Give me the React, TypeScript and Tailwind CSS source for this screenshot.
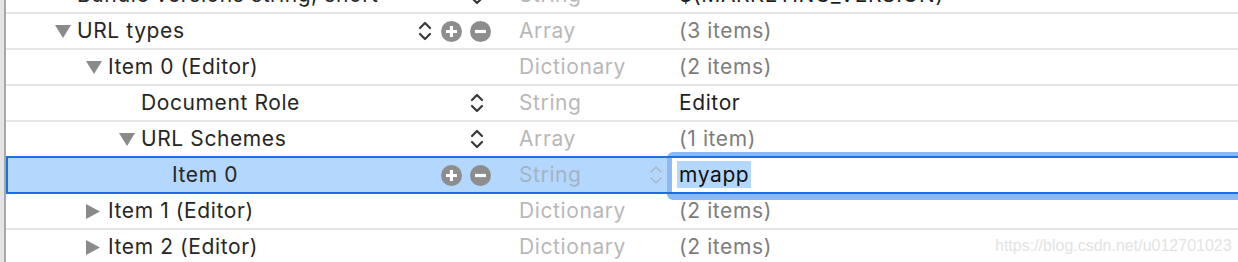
import React from "react";

const FONT = { fontFamily: "Inter, 'Noto Sans', sans-serif" };

function Stepper({ light = false }: { light?: boolean }) {
  const c = light ? "#a8b9cc" : "#3a3a3a";
  const w = light ? 1.6 : 2.2;
  return (
    <svg width="14" height="22" viewBox="0 0 14 22" className="block">
      <path d="M2 8 L7 3 L12 8" fill="none" stroke={c} strokeWidth={w} strokeLinecap="round" strokeLinejoin="round" />
      <path d="M2 14 L7 19 L12 14" fill="none" stroke={c} strokeWidth={w} strokeLinecap="round" strokeLinejoin="round" />
    </svg>
  );
}

function DownChevron() {
  return (
    <svg width="14" height="22" viewBox="0 0 14 22" className="block">
      <path d="M2 14 L7 19 L12 14" fill="none" stroke="#3a3a3a" strokeWidth={2.2} strokeLinecap="round" strokeLinejoin="round" />
    </svg>
  );
}

function PlusCircle() {
  return (
    <svg width="21" height="21" viewBox="0 0 21 21" className="block">
      <circle cx="10.5" cy="10.5" r="10.5" fill="#8d8d8d" />
      <path d="M10.5 5 V16 M5 10.5 H16" stroke="#fff" strokeWidth="3.2" />
    </svg>
  );
}

function MinusCircle() {
  return (
    <svg width="21" height="21" viewBox="0 0 21 21" className="block">
      <circle cx="10.5" cy="10.5" r="10.5" fill="#8d8d8d" />
      <path d="M5 10.5 H16" stroke="#fff" strokeWidth="3.2" />
    </svg>
  );
}

function TriDown() {
  return (
    <svg width="16" height="13" viewBox="0 0 16 13" className="block">
      <polygon points="0,0 16,0 8,13" fill="#8a8a8a" />
    </svg>
  );
}

function TriRight() {
  return (
    <svg width="14" height="15" viewBox="0 0 14 15" className="block">
      <polygon points="0,0 14,7.5 0,15" fill="#8a8a8a" />
    </svg>
  );
}

type Ctrl = "stepper" | "plus" | "minus" | "down" | null;

function Controls({ slots }: { slots: [Ctrl, Ctrl, Ctrl] }) {
  const render = (c: Ctrl) => {
    if (c === "stepper") return <Stepper />;
    if (c === "plus") return <PlusCircle />;
    if (c === "minus") return <MinusCircle />;
    if (c === "down") return <DownChevron />;
    return null;
  };
  return (
    <div className="w-[107px] shrink-0 flex items-center pl-[6px] h-full">
      <div className="w-[14px] flex items-center justify-start">{render(slots[0])}</div>
      <div className="w-[21px] ml-[9px] flex items-center justify-start">{render(slots[1])}</div>
      <div className="w-[21px] ml-[8px] flex items-center justify-start">{render(slots[2])}</div>
    </div>
  );
}

const TXT = "text-[21px] tracking-[0.6px] whitespace-nowrap";

function Row({
  pad,
  tri,
  label,
  slots,
  type,
  value,
  valueDark,
  borderClass = "border-[#e6e6e6]",
}: {
  pad: string;
  tri: "down" | "right" | null;
  label: string;
  slots: [Ctrl, Ctrl, Ctrl];
  type: string;
  value: string;
  valueDark?: boolean;
  borderClass?: string;
}) {
  return (
    <div className={`h-[36px] shrink-0 flex items-center border-b-2 ${borderClass}`}>
      <div className={`w-[406px] shrink-0 flex items-center ${pad}`}>
        <div className="w-[22px] shrink-0 flex items-center">
          {tri === "down" ? <TriDown /> : tri === "right" ? <TriRight /> : null}
        </div>
        <span className={`${TXT} text-[#262626]`}>{label}</span>
      </div>
      <Controls slots={slots} />
      <div className={`w-[160px] shrink-0 ${TXT} text-[#b8b8b8]`}>{type}</div>
      <div className={`flex-1 ${TXT} ${valueDark ? "text-[#1e1e1e]" : "text-[#7d7d7d]"}`}>{value}</div>
    </div>
  );
}

function SelectedRow() {
  return (
    <div className="relative h-[36px] shrink-0 flex items-center bg-[#b4d7fd]">
      <div className="absolute left-[661px] top-[-6px] bottom-[-6px] right-[-20px] z-10 bg-white border-t-[4px] border-b-[6px] border-l-[5px] border-[#8cb8f4] rounded-[6px]" />
      <div className="absolute left-0 right-0 top-[-2px] h-[2px] bg-[#1b6ee3] z-20" />
      <div className="absolute left-0 right-0 bottom-0 h-[2px] bg-[#1b6ee3] z-20" />
      <div className="absolute left-0 top-[-2px] bottom-0 w-[2px] bg-[#1b6ee3] z-20" />
      <div className="relative z-30 flex items-center h-full pb-[2px]">
        <div className="w-[406px] shrink-0 flex items-center pl-[144px]">
          <div className="w-[22px] shrink-0" />
          <span className={`${TXT} text-[#262626]`}>Item 0</span>
        </div>
        <Controls slots={[null, "plus", "minus"]} />
        <div className="w-[160px] shrink-0 flex items-center justify-between pr-[16px]">
          <span className={`${TXT} text-[#a3b3c4]`}>String</span>
          <Stepper light />
        </div>
        <div className="flex-1">
          <span className={`ml-[-2px] px-[2px] py-[1px] bg-[#b4d7fd] ${TXT} text-[#111]`}>myapp</span>
        </div>
      </div>
    </div>
  );
}

export default function App() {
  return (
    <div className="relative w-[1238px] h-[262px] overflow-hidden bg-white flex" style={FONT}>
      <div className="w-[4px] shrink-0 bg-[#e4e4e2]" />
      <div className="w-[2px] shrink-0 bg-[#a8a8a8]" />
      <div className="flex-1 flex flex-col mt-[-22px]">
        <Row pad="pl-[49px]" tri={null} label="Bundle versions string, short" slots={[null, null, "down"]} type="String" value="$(MARKETING_VERSION)" valueDark />
        <Row pad="pl-[49px]" tri="down" label="URL types" slots={["stepper", "plus", "minus"]} type="Array" value="(3 items)" />
        <Row pad="pl-[80px]" tri="down" label="Item 0 (Editor)" slots={[null, null, null]} type="Dictionary" value="(2 items)" />
        <Row pad="pl-[113px]" tri={null} label="Document Role" slots={[null, null, "stepper"]} type="String" value="Editor" valueDark />
        <Row pad="pl-[113px]" tri="down" label="URL Schemes" slots={[null, null, "stepper"]} type="Array" value="(1 item)" />
        <SelectedRow />
        <Row pad="pl-[80px]" tri="right" label="Item 1 (Editor)" slots={[null, null, null]} type="Dictionary" value="(2 items)" />
        <Row pad="pl-[80px]" tri="right" label="Item 2 (Editor)" slots={[null, null, null]} type="Dictionary" value="(2 items)" />
      </div>
      <div
        className="absolute left-[995px] top-[234px] text-[16px] text-[#e3e3e3] whitespace-nowrap"
        style={{ fontFamily: "'Liberation Sans', Arial, sans-serif" }}
      >
        https://blog.csdn.net/u012701023
      </div>
    </div>
  );
}
